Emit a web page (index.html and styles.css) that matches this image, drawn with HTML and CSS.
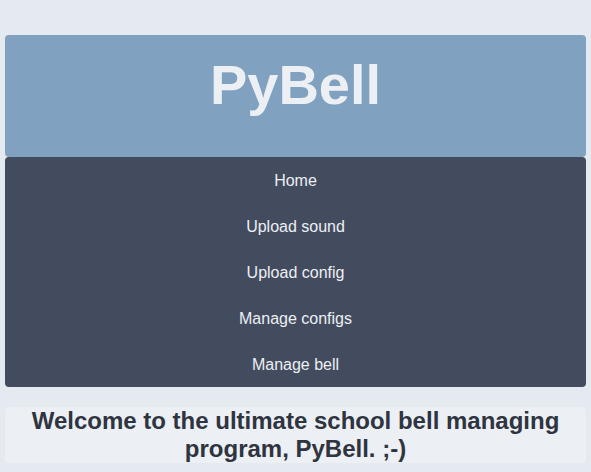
FILE: index.html
```html
<!DOCTYPE html>
<html>
<head>
<meta charset="utf-8">
<title>PyBell</title>
<link rel="stylesheet" href="styles.css">
</head>
<body>
<div class="page">
  <header class="header">
    <h1 class="title">PyBell</h1>
  </header>
  <nav class="nav">
    <a class="nav-item" href="#">Home</a>
    <a class="nav-item" href="#">Upload sound</a>
    <a class="nav-item" href="#">Upload config</a>
    <a class="nav-item" href="#">Manage configs</a>
    <a class="nav-item" href="#">Manage bell</a>
  </nav>
  <main class="welcome">
    <h2 class="welcome-text">Welcome to the ultimate school bell managing program, PyBell. ;-)</h2>
  </main>
</div>
</body>
</html>
```
FILE: styles.css
```css
html, body {
  margin: 0;
  padding: 0;
}
body {
  background: #e5e9f0;
  font-family: "Liberation Sans", Arial, sans-serif;
  color: #2e3440;
}
.page {
  padding: 35px 5px 0 5px;
  display: flex;
  flex-direction: column;
}
.header {
  background: #81a1c1;
  border-radius: 4px;
  padding: 19px 0 41px;
}
.title {
  margin: 0;
  text-align: center;
  font-size: 56px;
  line-height: 62px;
  font-weight: bold;
  color: #eceff4;
}
.nav {
  background: #434c5e;
  border-radius: 4px;
  display: flex;
  flex-direction: column;
}
.nav-item {
  display: block;
  padding: 15px 0 13px;
  line-height: 18px;
  text-align: center;
  font-size: 16px;
  color: #eceff4;
  text-decoration: none;
}
.welcome {
  margin-top: 20px;
  background: #eceff4;
  border-radius: 4px;
  padding: 0;
}
.welcome-text {
  margin: 0;
  text-align: center;
  font-size: 24px;
  line-height: normal;
  font-weight: bold;
  color: #2e3440;
}
```
